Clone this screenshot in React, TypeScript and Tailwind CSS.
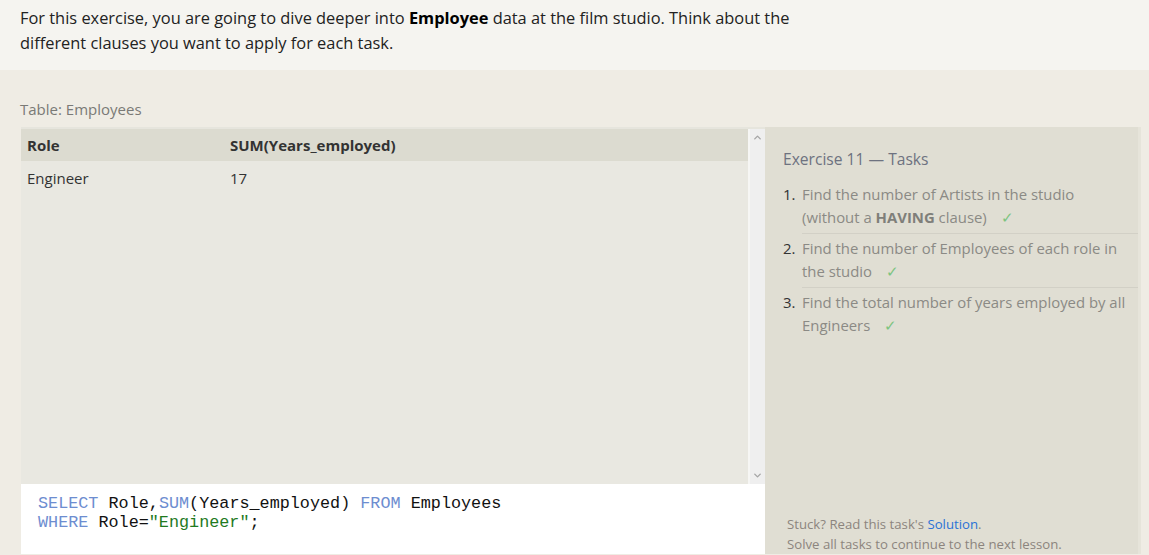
import { ChevronUp, ChevronDown } from 'lucide-react'

const tasks = [
  { n: 1, body: <>Find the number of Artists in the studio (without a <b className="font-bold text-[#7f7f7a]">HAVING</b> clause)</> },
  { n: 2, body: <>Find the number of Employees of each role in the studio</> },
  { n: 3, body: <>Find the total number of years employed by all Engineers</> },
]

export default function App() {
  return (
    <div className="h-[555px] w-[1149px] overflow-hidden bg-[#efece4] font-['Open_Sans',sans-serif]">
      {/* Intro */}
      <div className="h-[70px] bg-[#f5f4f0] px-5 pt-[5px] text-[16.4px] leading-[25px] text-[#222]">
        <p className="w-[800px]">
          For this exercise, you are going to dive deeper into <b className="font-bold text-black">Employee</b> data at the film studio. Think about the different clauses you want to apply for each task.
        </p>
      </div>

      <div className="px-5 pt-[29px] text-[15px] leading-[20px] text-[#7a7a76]">Table: Employees</div>

      <div className="ml-[21px] mt-[8px] flex h-[427px]">
        {/* Left: results + editor */}
        <div className="flex w-[744px] flex-col">
          <div className="flex h-[357px] border-t-2 border-[#e6e5dd] bg-[#e9e8e1]">
            <div className="flex-1">
              <div className="flex h-[32px] items-center bg-[#dcdbd0] text-[15px] font-bold text-[#333]">
                <div className="w-[209px] pl-[6px]">Role</div>
                <div>SUM(Years_employed)</div>
              </div>
              <div className="flex h-[34px] items-center text-[15px] text-[#333]">
                <div className="w-[209px] pl-[6px]">Engineer</div>
                <div>17</div>
              </div>
            </div>
            <div className="flex w-[17px] flex-col items-center justify-between border-l-2 border-[#f6f6f4] bg-[#efefef] py-[3px] text-[#a5a5a5]">
              <ChevronUp size={11} strokeWidth={3} />
              <ChevronDown size={11} strokeWidth={3} />
            </div>
          </div>
          <div className="flex-1 bg-white pl-[17px] pt-[10px] font-['Liberation_Mono','Courier_New',monospace] text-[16.8px] leading-[19px] text-[#111]">
            <div className="whitespace-pre"><span className="text-[#6d8dd0]">SELECT</span> Role,<span className="text-[#6d8dd0]">SUM</span>(Years_employed) <span className="text-[#6d8dd0]">FROM</span> Employees</div>
            <div className="whitespace-pre"><span className="text-[#6d8dd0]">WHERE</span> Role=<span className="text-[#1f7a1f]">"Engineer"</span>;</div>
          </div>
        </div>

        {/* Right: tasks */}
        <div className="flex w-[376px] flex-col justify-between border-r-[3px] border-[#e6e4da] bg-[#e0ded3] pl-[18px]">
          <div>
            <div className="pt-[20px] text-[15.6px] leading-[24px] text-[#6e7280]">Exercise 11 — Tasks</div>
            <ol className="mt-[12px] text-[14.9px] leading-[23px] text-[#8b8a85]">
              {tasks.map((t, i) => (
                <li key={t.n} className="flex">
                  <span className="w-[19px] shrink-0 text-[#333]">{t.n}.</span>
                  <div className={`flex-1 pr-[4px] ${i < tasks.length - 1 ? 'mb-[3px] border-b border-[#d2d0c6] pb-[4px]' : ''}`}>
                    {t.body}
                    <span className="ml-[14px] text-[#7cc47f]">✓</span>
                  </div>
                </li>
              ))}
            </ol>
          </div>
          <div className="pl-[4px] text-[13.2px] leading-[20px] text-[#8c857e]">
            <div>Stuck? Read this task's <span className="text-[#2a72d6]">Solution</span>.</div>
            <div>Solve all tasks to continue to the next lesson.</div>
          </div>
        </div>
      </div>
    </div>
  )
}
